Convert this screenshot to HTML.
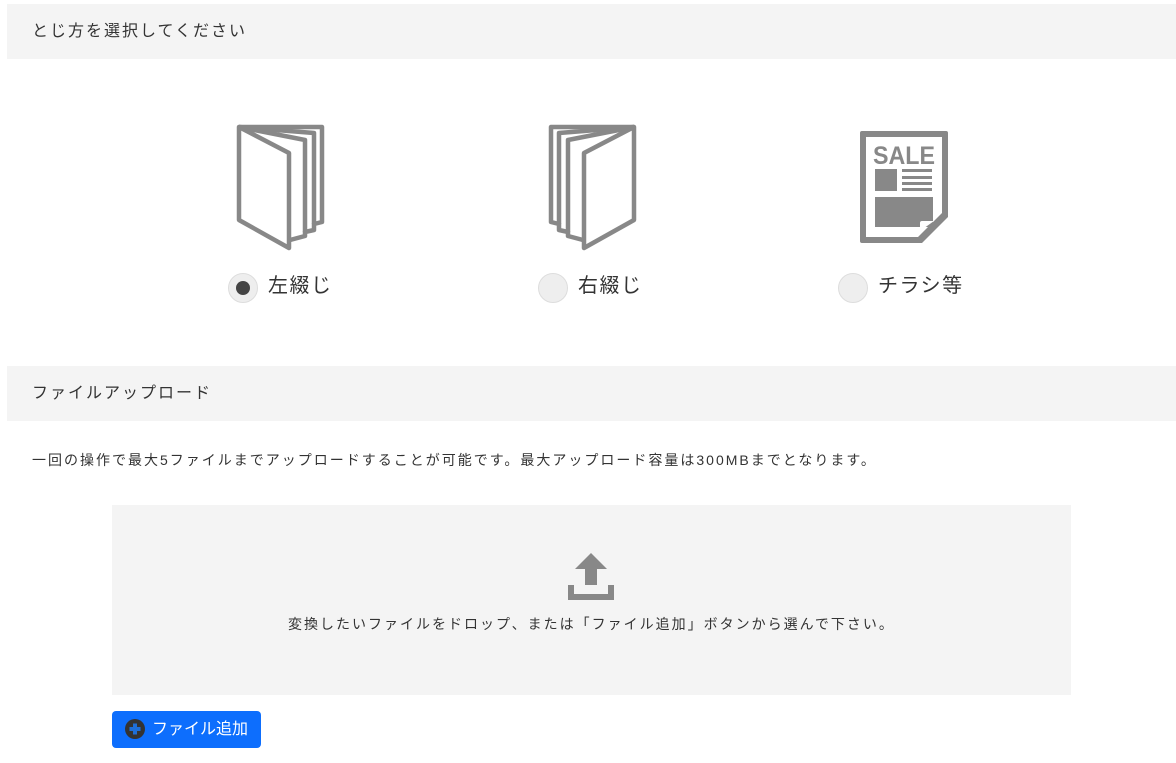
<!DOCTYPE html>
<html><head><meta charset="utf-8"><style>
body{margin:0;background:#fff;font-family:"Liberation Sans","Noto Sans CJK JP",sans-serif;color:#333;width:1176px;height:763px;overflow:hidden;position:relative}
.bar{position:absolute;left:7px;right:0;height:55px;background:#f4f4f4;font-size:16px;line-height:55px;padding-left:25px;letter-spacing:2px}
.abs{position:absolute}
.radio{position:absolute;width:28px;height:28px;border-radius:50%;background:#eee;border:1px solid #ddd}
.radio.on::after{content:"";position:absolute;left:7px;top:7px;width:14px;height:14px;border-radius:50%;background:#444}
.lbl{position:absolute;font-size:20px;line-height:28px;letter-spacing:1.5px}
</style></head><body>
<div class="bar" style="top:4px">とじ方を選択してください</div>

<svg class="abs" style="left:230px;top:118px" width="100" height="140" viewBox="230 118 100 140">
<g fill="none" stroke="#888" stroke-width="4.5" stroke-linejoin="round">
<path d="M239 127 H322 V222 L314 224 V230 L305 232 V236 L290 240"/>
<path d="M239 127 L305 140 V232"/>
<path d="M239 127 L314 133 V224"/>
<path d="M239 127 L289 153 V248 L239 220 Z"/>
</g></svg>
<svg class="abs" style="left:540px;top:118px" width="100" height="140" viewBox="540 118 100 140">
<g fill="none" stroke="#888" stroke-width="4.5" stroke-linejoin="round" transform="translate(873 0) scale(-1 1)">
<path d="M239 127 H322 V222 L314 224 V230 L305 232 V236 L290 240"/>
<path d="M239 127 L305 140 V232"/>
<path d="M239 127 L314 133 V224"/>
<path d="M239 127 L289 153 V248 L239 220 Z"/>
</g></svg>
<svg class="abs" style="left:858px;top:129px" width="92" height="116" viewBox="0 0 92 116">
<path d="M4 2 H88 Q90 2 90 4 V88 L64 114 H4 Q2 114 2 112 V4 Q2 2 4 2 Z" fill="#888"/>
<path d="M8 8 H84 V84 L60 108 H8 Z" fill="#fff"/>
<text x="46" y="35" text-anchor="middle" font-family="Liberation Sans" font-weight="bold" font-size="25" fill="#888" textLength="62" lengthAdjust="spacingAndGlyphs">SALE</text>
<rect x="17" y="40" width="22" height="22" fill="#888"/>
<g fill="#888"><rect x="44" y="40" width="30" height="3"/><rect x="44" y="47" width="30" height="3"/><rect x="44" y="53" width="30" height="3"/><rect x="44" y="59" width="30" height="3"/></g>
<rect x="17" y="68" width="58" height="30" fill="#888"/>
<path d="M62 102 V94 Q62 92 64 92 H76 Z" fill="#fff"/>
</svg>

<div class="radio on" style="left:228px;top:273px"></div><div class="lbl" style="left:268px;top:272px">左綴じ</div>
<div class="radio" style="left:538px;top:273px"></div><div class="lbl" style="left:578px;top:272px">右綴じ</div>
<div class="radio" style="left:838px;top:273px"></div><div class="lbl" style="left:878px;top:272px">チラシ等</div>

<div class="bar" style="top:366px">ファイルアップロード</div>
<div class="abs" style="left:32px;top:450px;font-size:14px;letter-spacing:2px;white-space:nowrap">一回の操作で最大5ファイルまでアップロードすることが可能です。最大アップロード容量は300MBまでとなります。</div>

<div class="abs" style="left:112px;top:505px;width:959px;height:190px;background:#f4f4f4"></div>
<svg class="abs" style="left:567px;top:553px" width="48" height="48" viewBox="0 0 48 48">
<path d="M24 0 L40 16 H30 V32 H18 V16 H8 Z" fill="#888"/>
<path d="M1 32 V47 H47 V32 H41 V41 H7 V32 Z" fill="#888"/>
</svg>
<div class="abs" style="left:112px;width:959px;top:614px;text-align:center;font-size:14px;letter-spacing:2px;white-space:nowrap">変換したいファイルをドロップ、または「ファイル追加」ボタンから選んで下さい。</div>

<div class="abs" style="left:112px;top:711px;width:149px;height:37px;background:#0d6efd;border-radius:4px;color:#fff;font-size:16px;line-height:37px">
<svg style="position:absolute;left:13px;top:8px" width="20" height="20" viewBox="0 0 20 20"><circle cx="10" cy="10" r="10" fill="#333"/><path d="M10 4.5V15.5M4.5 10H15.5" stroke="#1e6fd9" stroke-width="4"/></svg>
<span style="position:absolute;left:40px">ファイル追加</span></div>
</body></html>
